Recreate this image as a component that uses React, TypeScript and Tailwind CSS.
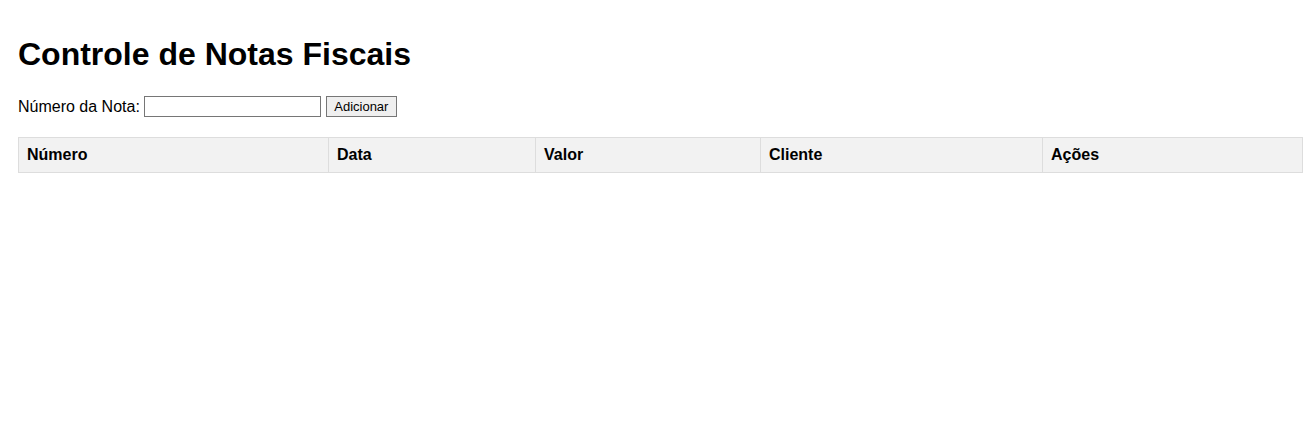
const columns = [
  { label: "Número", width: "w-[310px]" },
  { label: "Data", width: "w-[207px]" },
  { label: "Valor", width: "w-[225px]" },
  { label: "Cliente", width: "w-[282px]" },
  { label: "Ações", width: "w-[260px]" },
];

export default function App() {
  return (
    <div className="min-h-[443px] bg-white pl-[18px] pr-[8px] pt-[36px] font-['Liberation_Sans',Arial,sans-serif] text-black">
      <h1 className="text-[32px] font-bold leading-[37px]">Controle de Notas Fiscais</h1>

      <div className="mt-[23px] flex h-[21px] items-center text-[16px]">
        <label htmlFor="numero" className="mr-[4px] leading-[18px]">
          Número da Nota:
        </label>
        <input
          id="numero"
          type="text"
          className="h-[21px] w-[177px] border border-[#767676] bg-white px-[2px] text-[13px] outline-none"
        />
        <button
          type="button"
          className="ml-[5px] h-[21px] w-[71px] border border-[#767676] bg-[#efefef] text-[13px] leading-[19px]"
        >
          Adicionar
        </button>
      </div>

      <table className="mt-[20px] w-[1284px] table-fixed border-collapse">
        <thead>
          <tr>
            {columns.map((col) => (
              <th
                key={col.label}
                className={`${col.width} h-[35px] border border-[#dddddd] bg-[#f2f2f2] px-[8px] text-left text-[16px] font-bold`}
              >
                {col.label}
              </th>
            ))}
          </tr>
        </thead>
        <tbody></tbody>
      </table>
    </div>
  );
}
